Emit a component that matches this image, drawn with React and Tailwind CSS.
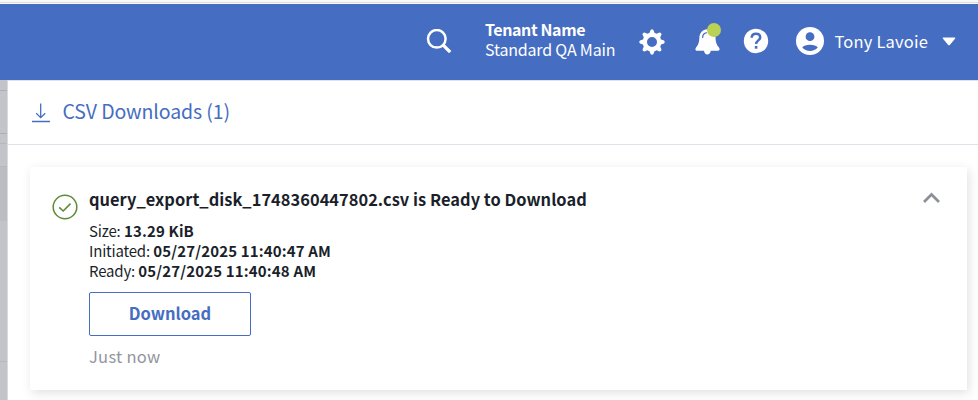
import React from "react";

const teeth = [0, 45, 90, 135, 180, 225, 270, 315];

function SearchIcon() {
  return (
    <svg className="h-[26px] w-[26px] shrink-0" viewBox="0 0 26 26" fill="none" stroke="white">
      <circle cx="10.8" cy="9.8" r="8.8" strokeWidth="2.5" />
      <path d="M17.2 16.2 24.2 23.2" strokeWidth="3.3" />
    </svg>
  );
}

function GearIcon() {
  return (
    <svg className="ml-[23px] h-[26px] w-[26px] shrink-0" viewBox="0 0 26 26">
      <circle cx="13" cy="13" r="7.2" fill="none" stroke="white" strokeWidth="4.4" />
      {teeth.map((a) => (
        <path key={a} d="M10.2 4.6 11.6 1Q13 -.4 14.4 1L15.8 4.6Z" fill="white" transform={`rotate(${a} 13 13)`} />
      ))}
    </svg>
  );
}

function BellIcon() {
  return (
    <div className="relative ml-[29px] h-[32px] w-[28px] shrink-0">
      <svg className="h-[32px] w-[28px]" viewBox="0 0 28 32">
        <path
          d="M13.2 6.2C8.6 6.5 5.6 9.8 5.4 14.3C5.2 19.3 4.6 21.3 2.2 24.3C1 25.8 1.1 27.7 2.6 27.7H10C10.2 30 11.6 31.4 13.3 31.4S16.5 30 16.8 27.7H24.3C25.9 27.7 26 25.8 24.8 24.3C22.3 21.3 21.7 19.3 21.5 14.3C21.2 9.8 18 6.5 13.2 6.2Z"
          fill="white"
        />
        <path d="M8.6 15C8.6 12 10.2 10.1 12.8 9.7" fill="none" stroke="#456dc1" strokeWidth="1.2" />
      </svg>
      <span className="absolute left-[13px] top-0 h-[14px] w-[14px] rounded-full bg-[#bbd153]" />
    </div>
  );
}

function HelpIcon() {
  return (
    <svg className="ml-[21px] mt-[-2px] h-[26px] w-[26px] shrink-0" viewBox="0 0 26 26">
      <circle cx="13" cy="13" r="12.2" fill="white" />
      <path d="M8.7 9.7C8.8 7.2 10.5 5.8 13 5.8C15.5 5.8 17.2 7.3 17.2 9.5C17.2 12.4 13.1 12.5 13.1 16.1" fill="none" stroke="#456dc1" strokeWidth="2.5" />
      <rect x="11.8" y="18" width="2.6" height="2.7" fill="#456dc1" />
    </svg>
  );
}

function UserIcon() {
  return (
    <svg className="ml-[27px] mt-[-2px] h-[28px] w-[28px] shrink-0" viewBox="0 0 28 28">
      <circle cx="14" cy="14" r="14" fill="white" />
      <circle cx="14" cy="9.7" r="4.4" fill="#456dc1" />
      <path d="M6.3 20.5C8.2 16.7 19.8 16.7 21.7 20.5C18.2 25 9.8 25 6.3 20.5Z" fill="#456dc1" />
    </svg>
  );
}

function Header() {
  return (
    <header className="flex h-[76px] items-center bg-[#456dc1] pl-[426px] text-[16px] leading-[20px] text-white">
      <SearchIcon />
      <div className="ml-[33px] w-[131px] shrink-0 whitespace-nowrap pb-[7px]">
        <div className="tracking-[-0.4px] font-bold">Tenant Name</div>
        <div className="tracking-[-0.18px]">Standard QA Main</div>
      </div>
      <GearIcon />
      <div className="pb-[6px]"><BellIcon /></div>
      <HelpIcon />
      <UserIcon />
      <span className="ml-[10.5px] mt-[-2px] w-[94px] shrink-0 whitespace-nowrap text-[16.5px] tracking-[0.18px]">Tony Lavoie</span>
      <svg className="ml-[13px] mt-[-2px] h-[9px] w-[14px] shrink-0" viewBox="0 0 14 9">
        <path d="M1.5.5H12.5Q14 .6 13 1.8L8 7.8Q7 8.8 6 7.8L1 1.8Q0 .6 1.5.5Z" fill="white" />
      </svg>
    </header>
  );
}

function Detail({ label, children }) {
  return (
    <div>
      <span className="tracking-[-0.2px]">{label}</span>{" "}
      <span className="font-bold tracking-[0.15px]">{children}</span>
    </div>
  );
}

function PageEdge() {
  return (
    <div className="flex w-[8px] shrink-0 flex-col border-r border-[#d8dae0] bg-[#c3c4ca]">
      <div className="h-[11px] border-b border-[#acafb6]" />
      <div className="h-[43px] border-b border-[#acafb6]" />
      <div className="h-[10px] border-b border-[#b5b7bd]" />
      <div className="h-[23px] border-b border-[#b5b7bd]" />
      <div className="h-[54px] bg-[#bcbdc3]" />
      <div className="h-[141px] border-b border-[#b5b7bd]" />
    </div>
  );
}

export default function App() {
  return (
    <div className="flex h-[400px] w-[978px] flex-col overflow-hidden bg-white font-['Noto_Sans_CJK_SC',sans-serif] text-[#1b1f2b]">
      <div className="h-[4px] shrink-0 border-b border-[#fafafa] bg-[#f8f8f8]">
        <div className="h-[3px] border-b border-[#dedede]" />
      </div>
      <Header />
      <div className="flex h-[320px]">
        <PageEdge />
        <main className="flex-1 border-t border-[#dfe2e8]">
          <div className="flex h-[64px] items-center border-b border-[#dfe1e8] pl-[24px] text-[#456dc1]">
            <svg className="h-[20px] w-[18px] shrink-0" viewBox="0 0 18 20" fill="none" stroke="currentColor" strokeWidth="1.3">
              <path d="M8.7.5V14.5M4.2 10.3 8.7 14.7 13.2 10.3M0 18.5H18" />
            </svg>
            <h1 className="ml-[12.5px] mt-[-3px] whitespace-nowrap text-[19.5px] font-normal leading-[28px] tracking-[-0.12px]">CSV Downloads (1)</h1>
          </div>
          <section className="ml-[22px] mt-[22px] flex h-[223px] w-[937px] bg-white pl-[22px] shadow-[2px_3px_10px_rgba(0,0,0,0.12)]">
            <svg className="mt-[27px] h-[26px] w-[26px] shrink-0" viewBox="0 0 26 26" fill="none" stroke="#5f8a3a" strokeWidth="1.5">
              <circle cx="13" cy="13" r="11.8" />
              <path d="M7.2 13.4 11.2 17 18.5 9.6" strokeWidth="1.6" />
            </svg>
            <div className="ml-[11px] flex w-[820px] flex-col whitespace-nowrap pt-[20px]">
              <h2 className="text-[16.4px] font-bold leading-[24px] tracking-[0.035px]">query_export_disk_1748360447802.csv is Ready to Download</h2>
              <div className="mt-[10px] text-[15px] leading-[20px]">
                <Detail label="Size:">13.29 KiB</Detail>
                <Detail label="Initiated:">05/27/2025 11:40:47 AM</Detail>
                <Detail label="Ready:">05/27/2025 11:40:48 AM</Detail>
              </div>
              <button className="mt-[11px] h-[44px] w-[162px] rounded-[2px] border border-[#456dc1] pb-[2px] text-[16.5px] font-bold leading-[20px] text-[#456dc1]">
                Download
              </button>
              <div className="mt-[9px] text-[16.5px] leading-[22px] tracking-[0.28px] text-[#92959d]">Just now</div>
            </div>
            <svg className="ml-[13.5px] mt-[25px] h-[12px] w-[17px] shrink-0" viewBox="0 0 17 12" fill="none" stroke="#8b8f98" strokeWidth="2.7">
              <path d="M1 10 8.5 2.5 16 10" />
            </svg>
          </section>
        </main>
      </div>
    </div>
  );
}
